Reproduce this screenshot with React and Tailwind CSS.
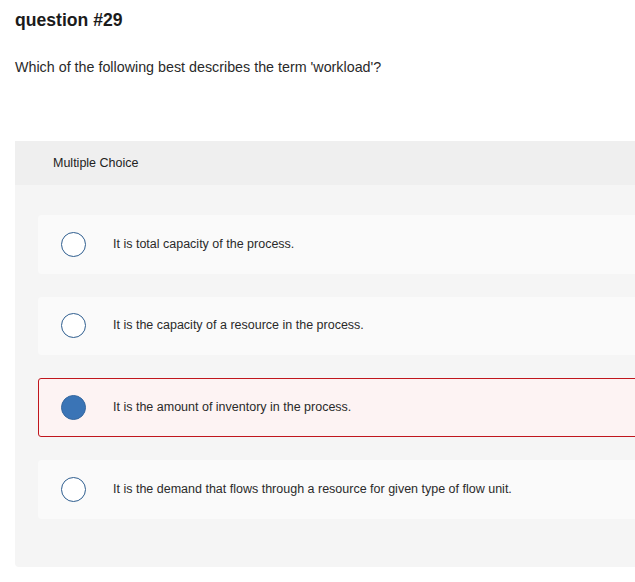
import React from "react";

const options = [
  { text: "It is total capacity of the process.", selected: false },
  { text: "It is the capacity of a resource in the process.", selected: false },
  { text: "It is the amount of inventory in the process.", selected: true },
  { text: "It is the demand that flows through a resource for given type of flow unit.", selected: false },
];

export default function App() {
  return (
    <div className="w-[635px] h-[582px] bg-white overflow-hidden text-[#333]" style={{ fontFamily: "'Liberation Sans', Arial, sans-serif" }}>
      <div className="pl-[15px] pt-[10px]">
        <h1 className="text-[17.6px] font-bold text-[#1b1b1b] leading-[20px]">question #29</h1>
        <p className="mt-[29px] text-[14.3px] leading-[16px] text-[#2a2a2a]">Which of the following best describes the term 'workload'?</p>
      </div>
      <div className="ml-[15px] mt-[66px] bg-[#f5f5f5] rounded-b-[4px] h-[426px] w-[660px]">
        <div className="h-[44px] bg-[#efefef] flex items-center pl-[38px] text-[12.5px] text-[#222]">Multiple Choice</div>
        <div className="pt-[30px] pl-[23px] flex flex-col gap-[23px]">
          {options.map((o, i) => (
            <div
              key={i}
              className={
                o.selected
                  ? "h-[59px] rounded-[3px] border border-[#c0161d] bg-[#fdf3f3] flex items-center pl-[22px]"
                  : "h-[58.5px] rounded-[4px] bg-[#fafafa] flex items-center pl-[23px]"
              }
            >
              {o.selected ? (
                <span className="w-[25px] h-[25px] rounded-full bg-[#3a74b6] border border-[#35679f] shrink-0" />
              ) : (
                <span className="w-[25px] h-[25px] rounded-full bg-white border-[1.5px] border-[#2f5e8f] shrink-0" />
              )}
              <span className="ml-[27px] text-[12.5px] text-[#2a2a2a]">{o.text}</span>
            </div>
          ))}
        </div>
      </div>
    </div>
  );
}
